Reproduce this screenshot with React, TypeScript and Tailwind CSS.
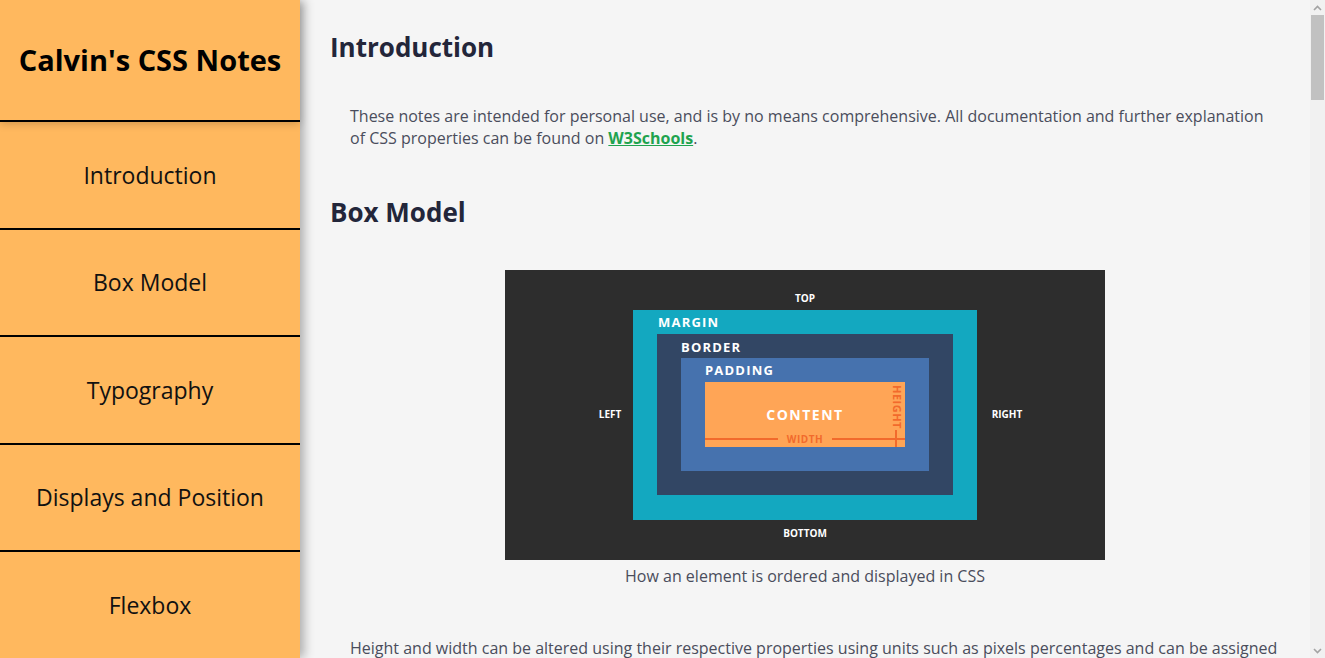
import React from "react";

const navItems = ["Introduction", "Box Model", "Typography", "Displays and Position", "Flexbox"];

function BoxModelDiagram() {
  const label = { fontFamily: "'Open Sans', 'DejaVu Sans', sans-serif", fontWeight: 700 } as const;
  return (
    <svg width="600" height="290" viewBox="0 0 600 290" className="block">
      <rect x="0" y="0" width="600" height="290" fill="#2d2d2d" />
      <rect x="128" y="40" width="344" height="210" fill="#13a8c0" />
      <rect x="152" y="64" width="296" height="161" fill="#324664" />
      <rect x="176" y="88" width="248" height="113" fill="#4672ae" />
      <rect x="200" y="112" width="200" height="65" fill="#ffa556" />
      <text x="300" y="32" textAnchor="middle" fill="#fff" fontSize="10" style={label}>TOP</text>
      <text x="300" y="267" textAnchor="middle" fill="#fff" fontSize="10" style={label}>BOTTOM</text>
      <text x="105" y="148" textAnchor="middle" fill="#fff" fontSize="10" style={label}>LEFT</text>
      <text x="502" y="148" textAnchor="middle" fill="#fff" fontSize="10" style={label}>RIGHT</text>
      <text x="153" y="57" fill="#fff" fontSize="13" letterSpacing="1.2" style={label}>MARGIN</text>
      <text x="176" y="82" fill="#fff" fontSize="13" letterSpacing="1.2" style={label}>BORDER</text>
      <text x="200" y="105" fill="#fff" fontSize="13" letterSpacing="1.2" style={label}>PADDING</text>
      <text x="300" y="150" textAnchor="middle" fill="#fff" fontSize="14" letterSpacing="1.5" style={label}>CONTENT</text>
      <line x1="200" y1="169" x2="273" y2="169" stroke="#f26a2c" strokeWidth="2" />
      <line x1="327" y1="169" x2="400" y2="169" stroke="#f26a2c" strokeWidth="2" />
      <line x1="391" y1="160" x2="391" y2="177" stroke="#f26a2c" strokeWidth="2" />
      <text x="300" y="173" textAnchor="middle" fill="#f26a2c" fontSize="10" letterSpacing="0.5" style={label}>WIDTH</text>
      <text
        x="0"
        y="0"
        transform="translate(388 137) rotate(90)"
        textAnchor="middle"
        fill="#f26a2c"
        fontSize="11"
        letterSpacing="0.5"
        style={label}
      >
        HEIGHT
      </text>
    </svg>
  );
}

function Scrollbar() {
  return (
    <div className="flex h-full w-[15px] shrink-0 flex-col bg-[#f1f1f1]">
      <div className="flex h-[15px] items-center justify-center">
        <svg width="9" height="6" viewBox="0 0 9 6">
          <path d="M1 5 L4.5 1.5 L8 5" fill="none" stroke="#a3a3a3" strokeWidth="1.6" />
        </svg>
      </div>
      <div className="mx-px h-[85px] bg-[#c1c1c1]" />
      <div className="flex-1" />
      <div className="flex h-[15px] items-center justify-center">
        <svg width="9" height="6" viewBox="0 0 9 6">
          <path d="M1 1 L4.5 4.5 L8 1" fill="none" stroke="#a3a3a3" strokeWidth="1.6" />
        </svg>
      </div>
    </div>
  );
}

export default function App() {
  return (
    <div
      className="flex h-screen w-full overflow-hidden bg-[#f5f5f5]"
      style={{ fontFamily: "'Open Sans', 'Noto Sans', sans-serif" }}
    >
      <nav className="relative z-10 flex h-full w-[300px] shrink-0 flex-col bg-[#ffb85e] shadow-[4px_0_10px_rgba(0,0,0,0.3)]">
        <header className="relative z-10 flex h-[120px] shrink-0 items-center justify-center bg-[#ffb85e] shadow-[0_4px_8px_rgba(0,0,0,0.18)]">
          <h1 className="text-[29px] font-bold text-black">Calvin's CSS Notes</h1>
        </header>
        {navItems.map((item) => (
          <a
            key={item}
            href="#"
            className="flex flex-1 items-center justify-center border-t-2 border-black text-[23px] font-medium text-[#111]"
          >
            {item}
          </a>
        ))}
      </nav>
      <main className="h-full flex-1 overflow-y-scroll">
        <div className="px-[30px] pb-[4200px] pt-[28px]">
          <section>
            <h2 className="text-[26px] font-bold leading-[38px] text-[#23263a]">Introduction</h2>
            <p className="mt-[39px] pl-5 text-base leading-[22px] text-[#4a4d5c]">
              These notes are intended for personal use, and is by no means comprehensive. All documentation and further
              explanation of CSS properties can be found on{" "}
              <a href="#" className="font-bold text-[#1fa34f] underline">
                W3Schools
              </a>
              .
            </p>
          </section>
          <section className="mt-[44px]">
            <h2 className="text-[26px] font-bold leading-[38px] text-[#23263a]">Box Model</h2>
            <figure className="mt-[39px] flex flex-col items-center">
              <BoxModelDiagram />
              <figcaption className="mt-[5px] text-base leading-[22px] text-[#4a4d5c]">
                How an element is ordered and displayed in CSS
              </figcaption>
            </figure>
            <p className="mt-[50px] pl-5 text-base leading-[22px] text-[#4a4d5c]">
              Height and width can be altered using their respective properties using units such as pixels percentages and
              can be assigned a value of auto which allows the browser to calculate a suitable size for the element.
            </p>
          </section>
        </div>
      </main>
      <Scrollbar />
    </div>
  );
}
